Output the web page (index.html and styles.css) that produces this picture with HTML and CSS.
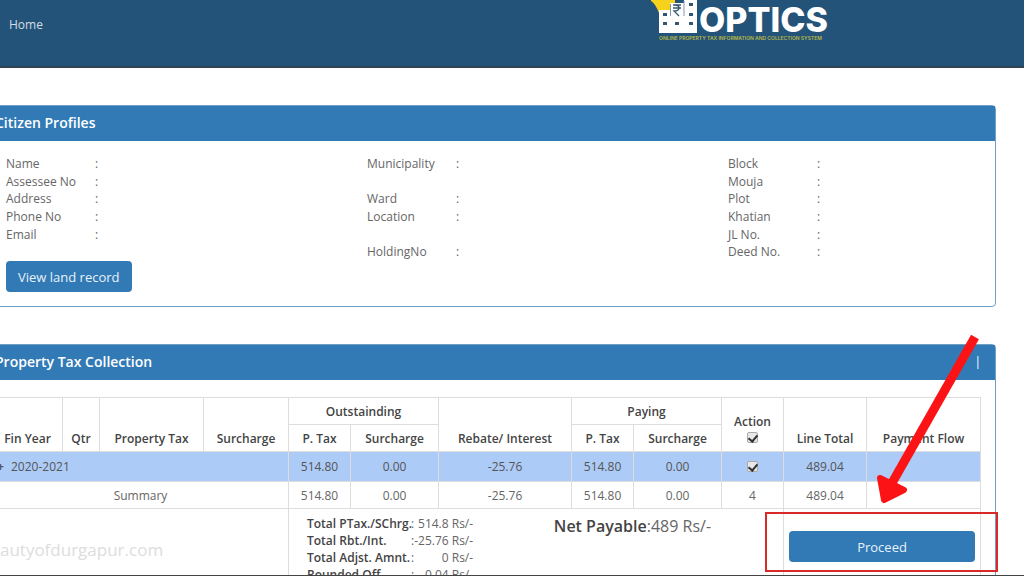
FILE: index.html
```html
<!DOCTYPE html>
<html lang="en">
<head>
<meta charset="utf-8">
<title>OPTICS - Property Tax Collection</title>
<link rel="stylesheet" href="styles.css">
</head>
<body>
<div class="page">
  <header class="topbar">
    <nav><a class="nav-link" href="#">Home</a></nav>
    <div class="brand">
      <svg class="brand-mark" width="46" height="34" viewBox="0 0 46 34" aria-hidden="true">
        <path d="M0 0H24V13H8Q4 3 0 1Z" fill="#f6d21c"/>
        <path d="M8 10H19V3H33V0H46V33H8Z" fill="#fff"/>
        <path d="M19.500 4V16M33 1V16" stroke="#7e99ad" stroke-width="1"/>
        <g fill="#34556f">
          <rect x="12" y="13" width="4" height="3"/><rect x="12" y="22" width="4" height="3"/>
          <rect x="24" y="22" width="4" height="3"/><rect x="38" y="3" width="4" height="3"/>
          <rect x="38" y="13" width="4" height="3"/><rect x="38" y="22" width="4" height="3"/>
        </g>
        <path d="M22 5H30M22 8H30M23 5Q28 5 28 8T23 11L28 16" fill="none" stroke="#34556f" stroke-width="1.3"/>
      </svg>
      <span class="brand-name">OPTICS</span>
      <span class="brand-tag">ONLINE PROPERTY TAX INFORMATION AND COLLECTION SYSTEM</span>
    </div>
  </header>

  <main class="content">
    <section class="panel">
      <h2 class="panel-head">Citizen Profiles</h2>
      <div class="profile">
        <div class="profile-grid">
          <dl class="facts">
            <dt>Name</dt><dd>:</dd>
            <dt>Assessee No</dt><dd>:</dd>
            <dt>Address</dt><dd>:</dd>
            <dt>Phone No</dt><dd>:</dd>
            <dt>Email</dt><dd>:</dd>
            <dt></dt><dd></dd>
          </dl>
          <dl class="facts">
            <dt>Municipality</dt><dd>:</dd>
            <dt></dt><dd></dd>
            <dt>Ward</dt><dd>:</dd>
            <dt>Location</dt><dd>:</dd>
            <dt></dt><dd></dd>
            <dt>HoldingNo</dt><dd>:</dd>
          </dl>
          <dl class="facts">
            <dt>Block</dt><dd>:</dd>
            <dt>Mouja</dt><dd>:</dd>
            <dt>Plot</dt><dd>:</dd>
            <dt>Khatian</dt><dd>:</dd>
            <dt>JL No.</dt><dd>:</dd>
            <dt>Deed No.</dt><dd>:</dd>
          </dl>
        </div>
        <button class="btn" type="button">View land record</button>
      </div>
    </section>

    <section class="panel panel-tax">
      <h2 class="panel-head">Property Tax Collection <span class="head-mark">|</span></h2>
      <div class="tax">
        <table class="tax-table">
          <colgroup>
            <col class="c-year"><col class="c-qtr"><col class="c-tax"><col class="c-sur">
            <col class="c-pt"><col class="c-ps"><col class="c-reb"><col class="c-pt"><col class="c-ps">
            <col class="c-act"><col class="c-line"><col class="c-flow">
          </colgroup>
          <thead>
            <tr>
              <th rowspan="2">Fin Year</th><th rowspan="2">Qtr</th><th rowspan="2">Property Tax</th><th rowspan="2">Surcharge</th>
              <th colspan="2">Outstainding</th><th rowspan="2">Rebate/ Interest</th><th colspan="2">Paying</th>
              <th rowspan="2"><label class="action">Action <input class="tick" type="checkbox" checked></label></th>
              <th rowspan="2">Line Total</th><th rowspan="2">Payment Flow</th>
            </tr>
            <tr><th>P. Tax</th><th>Surcharge</th><th>P. Tax</th><th>Surcharge</th></tr>
          </thead>
          <tbody>
            <tr class="selected">
              <td class="year" colspan="4"><span class="expand">+</span>2020-2021</td>
              <td>514.80</td><td>0.00</td><td>-25.76</td><td>514.80</td><td>0.00</td>
              <td><input class="tick" type="checkbox" aria-label="Select 2020-2021" checked></td>
              <td>489.04</td><td></td>
            </tr>
            <tr class="summary">
              <td colspan="4">Summary</td>
              <td>514.80</td><td>0.00</td><td>-25.76</td><td>514.80</td><td>0.00</td>
              <td>4</td><td>489.04</td><td></td>
            </tr>
            <tr class="closing">
              <td colspan="4"></td>
              <td colspan="6">
                <div class="totals">
                  <dl class="sums">
                    <dt>Total PTax./SChrg.</dt><dd>:</dd><dd>514.8 Rs/-</dd>
                    <dt>Total Rbt./Int.</dt><dd>:</dd><dd>-25.76 Rs/-</dd>
                    <dt>Total Adjst. Amnt.</dt><dd>:</dd><dd>0 Rs/-</dd>
                    <dt>Rounded Off.</dt><dd>:</dd><dd>-0.04 Rs/-</dd>
                  </dl>
                  <p class="net"><strong>Net Payable</strong>:489 Rs/-</p>
                </div>
              </td>
              <td colspan="2"><div class="pay"><button class="btn btn-wide" type="button">Proceed</button></div></td>
            </tr>
          </tbody>
        </table>
      </div>
    </section>
  </main>

  <span class="watermark">beautyofdurgapur.com</span>
  <div class="highlight"></div>
  <svg class="pointer" width="110" height="174" viewBox="0 0 110 174" aria-hidden="true">
    <path d="M105 2L22 148" stroke="#fb1316" stroke-width="9"/>
    <path d="M10 143L34 155L14 165Z" fill="#fb1316" stroke="#fb1316" stroke-width="6" stroke-linejoin="round"/>
  </svg>
</div>
</body>
</html>
```
FILE: styles.css
```css
* { box-sizing: border-box; }

body {
  margin: 0;
  background: #fff;
  color: #666;
  font: 12px/17px "Open Sans", "Noto Sans", sans-serif;
}

.page {
  position: relative;
  height: 100vh;
  overflow: hidden;
  border-bottom: 1px solid #444;
}

.topbar {
  display: flex;
  justify-content: space-between;
  align-items: flex-start;
  height: 68px;
  padding: 0 196px 0 9px;
  background: #235379;
  border-bottom: 2px solid #304350;
}

.nav-link {
  display: block;
  padding-top: 16px;
  color: #d3dde5;
  text-decoration: none;
}

.brand {
  display: grid;
  grid-template-columns: 46px auto;
  column-gap: 2px;
  color: #fff;
}

.brand-name {
  height: 34px;
  padding-top: 6px;
  font: 800 34px/28px Inter, sans-serif;
}

.brand-tag {
  grid-column: 1 / 3;
  padding-left: 8px;
  color: #b9b944;
  font: 600 5px/8px Inter, sans-serif;
  white-space: nowrap;
}

.content {
  margin: 37px 28px 0 -24px;
}

.panel {
  border: 1px solid #6f9fc4;
  border-radius: 4px;
}

.panel-tax {
  margin-top: 37px;
}

.panel-head {
  display: flex;
  justify-content: space-between;
  margin: 0;
  padding: 7px 14px 8px 18px;
  background: #317ab6;
  color: #fff;
  font-size: 14px;
  line-height: 20px;
  font-weight: 600;
}

.head-mark {
  font-size: 12px;
  font-weight: 400;
}

.profile {
  padding: 14px 15px 14px 29px;
}

.profile-grid {
  display: grid;
  grid-template-columns: 361fr 361fr 252fr;
}

.facts {
  display: grid;
  grid-template-columns: 89px auto;
  grid-auto-rows: 1fr;
  min-height: 106px;
  margin: 0;
}

.facts dd {
  margin: 0;
}

.btn {
  display: block;
  height: 31px;
  padding: 0 12px;
  border: 0;
  border-radius: 4px;
  background: #317ab6;
  color: #e8f1f8;
  font: 13px/18px "Open Sans", "Noto Sans", sans-serif;
}

.btn-wide {
  width: 100%;
}

.tax {
  padding: 17px 15px 0;
}

.tax-table {
  width: 100%;
  border-collapse: collapse;
  table-layout: fixed;
}

.c-year { width: 70px; }
.c-qtr { width: 37px; }
.c-tax { width: 104px; }
.c-sur { width: 85px; }
.c-pt { width: 62px; }
.c-ps { width: 88px; }
.c-reb { width: 133px; }
.c-act { width: 62px; }
.c-line { width: 83px; }
.c-flow { width: 114px; }

.tax-table th,
.tax-table td {
  padding: 5px 0 4px;
  border: 1px solid #ddd;
  text-align: center;
}

.tax-table th {
  color: #444;
  font-weight: 600;
  vertical-align: bottom;
}

.action {
  display: flex;
  flex-direction: column;
  align-items: center;
}

.tick {
  appearance: none;
  display: block;
  width: 11px;
  height: 11px;
  margin: 2px auto 4px;
  border: 1px solid #aaa;
  border-radius: 2px;
  background: #e8e8e8;
}

.selected .tick {
  margin: 3px auto;
}

.tick:checked::after {
  content: "";
  display: block;
  width: 4px;
  height: 7px;
  margin: 0 auto;
  border: solid #333;
  border-width: 0 2px 2px 0;
  transform: rotate(40deg);
}

.tax-table .selected td {
  padding: 6px 0;
  background: #adcbf7;
  color: #555;
}

.tax-table .selected .year {
  padding-left: 4px;
  text-align: left;
}

.expand {
  display: inline-block;
  width: 14px;
  font-weight: 700;
}

.tax-table .closing td {
  padding: 6px 5px;
  text-align: left;
  vertical-align: top;
}

.totals {
  display: flex;
  justify-content: space-between;
  padding: 0 67px 0 13px;
}

.sums {
  display: grid;
  grid-template-columns: 104px auto auto;
  margin: 0;
  line-height: 17px;
  white-space: nowrap;
}

.sums dt {
  color: #444;
  font-weight: 600;
}

.sums dd {
  margin: 0;
  text-align: right;
}

.net {
  margin: 0;
  font-size: 16px;
  line-height: 22px;
}

.net strong {
  color: #444;
  font-weight: 600;
}

.pay {
  padding: 16px 0 0;
}

.watermark {
  position: absolute;
  left: -20px;
  bottom: 14px;
  color: #ddd;
  font-size: 17px;
  line-height: 22px;
}

.highlight {
  position: absolute;
  right: 26px;
  bottom: 3px;
  width: 233px;
  height: 60px;
  border: 2px solid #d92a2a;
}

.pointer {
  position: absolute;
  right: 44px;
  top: 335px;
}
```
